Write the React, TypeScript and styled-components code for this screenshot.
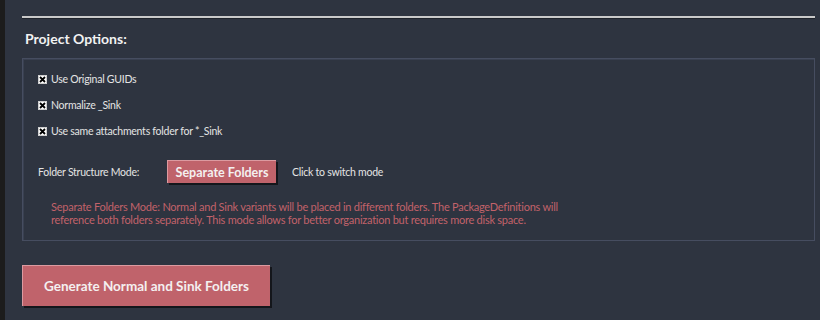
import styled, { createGlobalStyle } from 'styled-components';

const GlobalStyle = createGlobalStyle`
  html, body {
    margin: 0;
    padding: 0;
    background: #1c1c1c;
  }
  body {
    font-family: Lato, 'Open Sans', sans-serif;
  }
  * {
    box-sizing: border-box;
  }
`;

const Page = styled.div`
  display: flex;
  width: 820px;
  height: 320px;
  overflow: hidden;
`;

const Strip = styled.div`
  width: 5px;
  background: #1c1c1c;
`;

const Main = styled.div`
  flex: 1;
  background: #2e3440;
  padding: 16px 5px 0 17px;
`;

const Rule = styled.div`
  height: 2px;
  background: #c9c9c9;
  box-shadow: 0 1px 0 #1f232b;
`;

const Title = styled.h2`
  margin: 12px 0 0 3px;
  font-family: Lato, 'Liberation Sans', sans-serif;
  font-weight: bold;
  font-size: 14px;
  line-height: 17px;
  color: #f2f2f2;
`;

const OptionsBox = styled.div`
  margin-top: 11px;
  height: 183px;
  border: 1px solid #464d60;
  box-shadow: inset 1px 1px 0 #394050;
  padding: 13px 15px 0 15px;
  display: flex;
  flex-direction: column;
`;

const CheckRow = styled.label`
  display: flex;
  align-items: center;
  gap: 4px;
  height: 14px;
  margin-bottom: 12px;
  font-size: 10.5px;
  letter-spacing: -0.25px;
  color: #e4e4e4;
`;

const Box = styled.span`
  width: 9px;
  height: 9px;
  display: inline-flex;
  background: #ffffff;
`;

const ModeRow = styled.div`
  display: flex;
  align-items: center;
  margin-top: 10px;
  font-size: 10.5px;
  letter-spacing: -0.25px;
  color: #e4e4e4;
`;

const ModeLabel = styled.span`
  width: 129px;
`;

const RedButton = styled.button<{ $big?: boolean }>`
  background: #c0636b;
  color: #f4f0f0;
  font-family: Lato, 'Liberation Sans', sans-serif;
  font-weight: bold;
  font-size: ${(p) => (p.$big ? '13.5px' : '12.5px')};
  letter-spacing: 0;
  border: none;
  border-top: 1px solid #dc9aa0;
  border-left: 1px solid #dc9aa0;
  box-shadow: 2px 2px 0 #14161b;
  padding: 0;
  width: ${(p) => (p.$big ? '248px' : '109px')};
  height: ${(p) => (p.$big ? '41px' : '23px')};
  cursor: pointer;
`;

const Hint = styled.span`
  margin-left: 16px;
`;

const Description = styled.p`
  margin: 17px 0 0 13px;
  width: 515px;
  font-size: 11px;
  letter-spacing: -0.25px;
  line-height: 13px;
  color: #c2626a;
`;

const Footer = styled.div`
  margin-top: 24px;
`;

const CheckIcon = () => (
  <Box>
    <svg width="9" height="9" viewBox="0 0 9 9">
      <rect x="0.5" y="0.5" width="8" height="8" fill="#fff" stroke="#cfcfcf" />
      <path d="M2 2 L7 7 M7 2 L2 7" stroke="#000" strokeWidth="1.8" />
    </svg>
  </Box>
);

const options = ['Use Original GUIDs', 'Normalize _Sink', 'Use same attachments folder for *_Sink'];

export default function App() {
  return (
    <Page>
      <GlobalStyle />
      <Strip />
      <Main>
        <Rule />
        <Title>Project Options:</Title>
        <OptionsBox>
          {options.map((o) => (
            <CheckRow key={o}>
              <CheckIcon />
              {o}
            </CheckRow>
          ))}
          <ModeRow>
            <ModeLabel>Folder Structure Mode:</ModeLabel>
            <RedButton>Separate Folders</RedButton>
            <Hint>Click to switch mode</Hint>
          </ModeRow>
          <Description>
            Separate Folders Mode: Normal and Sink variants will be placed in different folders. The PackageDefinitions will
            reference both folders separately. This mode allows for better organization but requires more disk space.
          </Description>
        </OptionsBox>
        <Footer>
          <RedButton $big>Generate Normal and Sink Folders</RedButton>
        </Footer>
      </Main>
    </Page>
  );
}
